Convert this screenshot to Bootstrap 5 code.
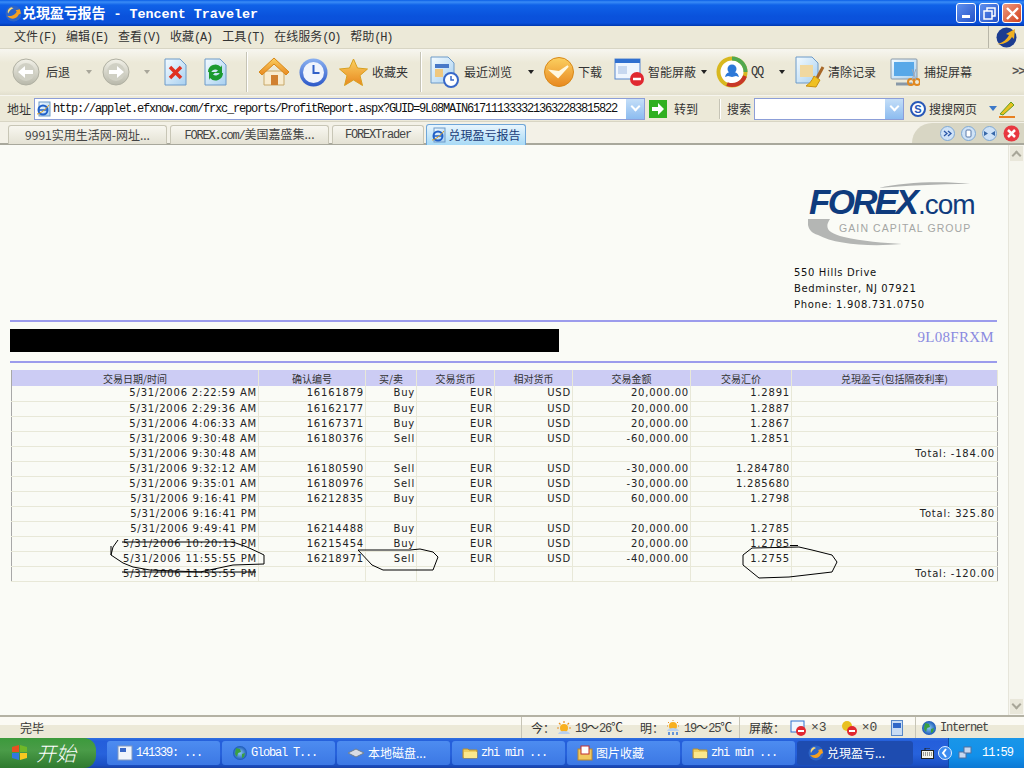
<!DOCTYPE html>
<html lang="zh-CN">
<head>
<meta charset="UTF-8" />
<meta name="viewport" content="width=device-width, initial-scale=1.0" />
<title>兑現盈亏报告 - Tencent Traveler</title>
<link href="https://cdn.jsdelivr.net/npm/bootstrap@5.3.0/dist/css/bootstrap.min.css" rel="stylesheet" />
<style>
  html, body { height: 768px; overflow: hidden; }
  body { background: #ece9d8; color: #333; font: 12px/1 "Noto Sans CJK SC", "Liberation Sans", sans-serif; }
  svg { display: block; flex: none; }
  .lat { font-family: "Liberation Mono", monospace; letter-spacing: -1.2px; }
  .app-win { width: 1024px; height: 768px; }

  .title-bar { height: 26px; padding-left: 5px; color: #fff; font-weight: 700; font-size: 14px;
    background: linear-gradient(#0a5ee6, #3a8cf6 2px, #0f62e8 5px, #0a52dc 16px, #0a50da 23px, #0038b0); }
  .title-txt { letter-spacing: -.1px; }
  .title-txt .lat { font-size: 13.4px; letter-spacing: 0; margin-left: 8px; }
  .win-btns { gap: 3px; margin-right: 2px; }
  .win-btn { width: 20px; height: 20px; border: 1px solid #fff; border-radius: 3px; background: linear-gradient(135deg, #5f90ee, #2452c8); }
  .win-btn.close-x { background: linear-gradient(135deg, #ee9a80, #d2401c); }

  .menu-bar { height: 23px; padding-left: 14px; gap: 10px; border-bottom: 1px solid #d8d5c4; background: #ece9d8; color: #333; }
  .menu-logo { width: 36px; height: 100%; border-left: 1px solid #b8b6a8; }

  .tool-bar { height: 47px; display: grid; align-items: center; padding-left: 12px; font-size: 12px; border-bottom: 1px solid #f6f5ee;
    grid-template-columns: 34px 40px 16px 42px 20px 40px 42px 12px 41px 40px 33px 48px 10px 34px 64px 16px 34px 36px 34px 53px 15px 35px 28px 16px 33px 62px 34px 88px 12px;
    background: linear-gradient(#f7f6f0, #ece9d8 30%, #ece9d8 90%, #e2dfce); }
  .tool-sep { width: 2px; height: 40px; background: #c6c4b6; border-right: 1px solid #fff; }
  .caret-dn { width: 0; height: 0; border: 3px solid transparent; border-top: 4px solid #222; border-bottom: 0; }
  .caret-dn.is-off { border-top-color: #a8a69a; }
  .caret-blue { border-top-color: #3c78c8; border-width: 4px; border-top-width: 5px; border-bottom: 0; }
  .tool-more { font-size: 12px; color: #555; font-weight: 700; letter-spacing: -1px; }

  .addr-bar { height: 26px; padding-left: 7px; display: grid; align-items: center; background: #ece9d8; border-bottom: 1px solid #d8d5c4; color: #333;
    grid-template-columns: 27px 615px 70px 35px 156px 19px 60px 9px 20px; }
  .addr-box { height: 22px; width: 611px; background: #fff; border: 1px solid #8c9ed8; padding-left: 1px; gap: 1px; overflow: hidden; color: #111; }
  .addr-url { font-size: 12px; white-space: nowrap; width: 571px; overflow: hidden; }
  .combo-arrow { width: 18px; height: 20px; flex: none; margin-left: auto; background: linear-gradient(#c4def8, #8cbcf0); display: flex; align-items: center; justify-content: center; }
  .combo-arrow::after { content: ""; width: 7px; height: 7px; border-right: 2px solid #fff; border-bottom: 2px solid #fff; transform: translateY(-2px) rotate(45deg); }
  .go-cell { gap: 7px; }
  .srch-cell { gap: 6px; }
  .srch-box { height: 22px; width: 150px; background: #fff; border: 1px solid #8c9ed8; }
  .srch-sep { width: 2px; height: 20px; background: #c6c4b6; border-right: 1px solid #fff; }

  .tab-bar { height: 23px; padding: 3px 0 0 8px; gap: 3px; background: #f3f1e7; border-bottom: 2px solid #a8a89c; color: #444; position: relative; }
  .tab-item { height: 19px; width: 159px; background: linear-gradient(#f8f7f0, #e4e2d4); border: 1px solid #c8c6b6; border-bottom: 0; border-radius: 3px 3px 0 0; justify-content: center; white-space: nowrap; }
  .tab-sm { width: 92px; }
  .tab-on { width: 100px; height: 21px; margin-top: -1px; background: linear-gradient(#e8f5fd, #a8daf6); border-color: #6fa6d8; color: #1a3c78; font-size: 12px; gap: 1px; margin-left: -1px; }
  .tab-tools { margin-left: auto; width: 112px; height: 20px; margin-top: -2px; padding: 0 4px 0 24px; gap: 6px; background: #d8d6c4; border-radius: 32px 0 0 0; justify-content: flex-end; }

  .page-area { height: 570px; background: #fafbf6; position: relative; overflow: hidden; }
  .page-main { width: 1008px; padding: 0 11px 0 10px; height: 570px; }
  .scroll-bar { width: 16px; background: #f6f6ee; border-left: 1px solid #e6e5da; }
  .scroll-btn { width: 15px; height: 17px; background: #e9e7da; border: 1px solid #f6f5ee; display: flex; align-items: center; justify-content: center; }
  .scroll-btn::after { content: ""; width: 7px; height: 7px; border-left: 2px solid #a8a698; border-top: 2px solid #a8a698; transform: translateY(2px) rotate(45deg); }
  .scroll-dn::after { transform: translateY(-2px) rotate(225deg); }
  .logo-wrap { padding-top: 36px; padding-right: 22px; height: 120px; }
  .logo-box { width: 167px; height: 66px; position: relative; color: #0f3b7d; }
  .logo-box svg { position: absolute; inset: 0; }
  .logo-word { position: absolute; left: 1px; top: 7px; font: italic 700 35px/28px "Liberation Sans", sans-serif; letter-spacing: -2.7px; white-space: nowrap; }
  .logo-word b { font-weight: 400; font-style: normal; font-size: 28px; letter-spacing: -1.1px; margin-left: 2px; }
  .logo-sub { position: absolute; left: 31px; top: 42px; font: 400 10.5px/1 "Liberation Sans", sans-serif; color: #a4a6a4; white-space: nowrap; letter-spacing: 1.1px; }
  .addr-lines { padding-left: 784px; font: 10px/16px "DejaVu Sans", sans-serif; letter-spacing: .65px; color: #111; height: 55px; }
  .rule-box { height: 43px; border-top: 2px solid #9c9cec; border-bottom: 2px solid #9c9cec; padding: 7px 3px 0 0; }
  .black-bar { width: 549px; height: 23px; background: #000; }
  .acct-code { font: 15px "Liberation Serif", serif; color: #8a8ae0; letter-spacing: .3px; }

  .rpt { width: 986px; margin: 7px 0 0 1px; table-layout: fixed; border-collapse: collapse; border: 1px solid #a8a8a8; border-top: 0; font: 10px/14px "DejaVu Sans", sans-serif; letter-spacing: .8px; color: #222; --bs-table-bg: transparent; }
  .rpt > thead > tr > th { background: #ccccf4; height: 16px; padding: 0; text-align: center; font: 400 10px/14px "Noto Sans CJK SC", sans-serif; letter-spacing: 0; color: #333; border: 0; border-right: 1px solid #e8e8d8; }
  .rpt > tbody > tr > td { height: 15px; padding: 0 1px 0 0; text-align: right; border: 0; border-bottom: 1px solid #e8e8d8; border-right: 1px solid #e8e8d8; white-space: nowrap; overflow: hidden; color: #222; background: transparent; box-shadow: none; }
  .rpt > tbody > tr > td:last-child { border-right: 0; padding-right: 2px; }
  .c-date { width: 247px; } .c-num { width: 107px; } .c-side { width: 51px; } .c-cur { width: 78px; }
  .c-amt { width: 118px; } .c-rate { width: 101px; } .c-pl { width: 206px; }
  .ink-layer { position: absolute; left: 0; top: 0; pointer-events: none; }

  .status-bar { height: 23px; padding-left: 20px; color: #333; border-top: 2px solid #b4b2a4; background: linear-gradient(#fbfaf4 40%, #ece9d8 40%); }
  .stat-cell { height: 100%; border-left: 1px solid #c6c4b6; white-space: nowrap; }
  .stat-done { width: 501px; padding-top: 1px; }
  .stat-wea { width: 218px; padding-left: 9px; }
  .stat-blk { width: 176px; padding-left: 9px; }
  .stat-net { width: 108px; padding-left: 5px; gap: 3px; }
  .stat-cell .lat { color: #444; }
  .stat-cell .blk-num { font-size: 13px; letter-spacing: 0; }
  .wea-t1 { margin: 0 3px 0 1px; }
  .wea-lbl { margin-left: 17px; }
  .blk-ico { margin: 0 5px 0 14px; }
  .blk-first { margin-left: 5px; }

  .task-bar { height: 30px; color: #fff; background: linear-gradient(#2f70e0, #245edb 3px, #2762dc 16px, #1a4fc4 27px, #1941a5); }
  .start-btn { width: 96px; height: 30px; padding-left: 11px; gap: 7px; border-radius: 0 12px 12px 0; background: linear-gradient(#3c9a3c, #4a9c48 40%, #2f7a2f); font: italic 300 20px/1 "Noto Sans CJK SC", sans-serif; color: #fff; }
  .task-list { padding-left: 11px; gap: 2px; }
  .task-item { width: 113px; height: 24px; padding-left: 10px; gap: 3px; background: linear-gradient(#4d8cf0, #3c78e4); border-radius: 3px; white-space: nowrap; overflow: hidden; }
  .task-on { width: 116px; background: #1e4cb0; padding-left: 11px; }
  .tray-out { margin-left: auto; gap: 4px; margin-right: -4px; z-index: 1; position: relative; }
  .tray-box { width: 76px; height: 30px; padding-left: 9px; background: linear-gradient(#1a96e8, #1290ea 60%, #0c78d4); border-left: 1px solid #0c4ca8; }
  .tray-time { margin-left: 10px; font-size: 12px; letter-spacing: -1px; }
</style>
</head>
<body>
<svg width="0" height="0" class="position-absolute">
  <defs>
    <linearGradient id="gGray" x1="0" y1="0" x2="0" y2="1"><stop offset="0" stop-color="#f2f1e8"/><stop offset="1" stop-color="#b8b8aa"/></linearGradient>
    <linearGradient id="gPage" x1="0" y1="0" x2="1" y2="1"><stop offset="0" stop-color="#f4fbff"/><stop offset="1" stop-color="#a8d0f0"/></linearGradient>
    <linearGradient id="gOrange" x1="0" y1="0" x2="0" y2="1"><stop offset="0" stop-color="#fbd060"/><stop offset="1" stop-color="#e88820"/></linearGradient>
    <linearGradient id="gBlue" x1="0" y1="0" x2="0" y2="1"><stop offset="0" stop-color="#8ab0f0"/><stop offset="1" stop-color="#2c58c8"/></linearGradient>
    <radialGradient id="gGlobe"><stop offset="0" stop-color="#8ccaf0"/><stop offset="1" stop-color="#1a58b8"/></radialGradient>
    <symbol id="i-app" viewBox="0 0 16 16"><circle cx="8" cy="8" r="7.5" fill="#2c64c8"/><path d="M2 10c3 4 9 4 11-1l2-1-1-4-4 1 1 1c-1 3-5 5-9 4z" fill="#f6a020"/><path d="M6 2c-3 1-4 4-3 6 1-2 2-4 5-5z" fill="#f8d878"/></symbol>
    <symbol id="i-ie" viewBox="0 0 16 16"><rect x="3" y="1" width="11" height="14" fill="url(#gPage)" stroke="#6d9ac8"/><circle cx="7" cy="9" r="4.5" fill="none" stroke="#2060c8" stroke-width="2"/><path d="M3 9h8" stroke="#2060c8" stroke-width="1.5"/><path d="M1 13c3 0 9-5 12-9" fill="none" stroke="#e0a020"/></symbol>
    <symbol id="i-globe" viewBox="0 0 16 16"><circle cx="8" cy="8" r="7" fill="url(#gGlobe)"/><path d="M4 3l4 1 1 3-3 1-1 4-2-3zM10 9l3-1-1 4-2 1z" fill="#3aa040"/></symbol>
    <symbol id="i-folder" viewBox="0 0 16 16"><path d="M1 4h5l1 1h8v8H1z" fill="#f0d060" stroke="#b89030"/><path d="M2 7h13v6H2z" fill="#fbe88c"/></symbol>
    <symbol id="i-sun" viewBox="0 0 16 16"><circle cx="8" cy="8" r="4" fill="#f8b020"/><path d="M8 1v2M1 8h2M13 8h2M3 3l1.500 1.500M13 3l-1.500 1.500" stroke="#e89020" stroke-width="1.200"/><path d="M2 14c1-4 11-4 12 0z" fill="#b8d0f0"/></symbol>
    <symbol id="i-rain" viewBox="0 0 16 16"><circle cx="8" cy="6" r="4" fill="#f8b020"/><path d="M8 0v1M2 6h1M13 6h1M3 2l1 1M13 2l-1 1" stroke="#e89020"/><path d="M2 11c1-4 11-4 12 0z" fill="#b8d0f0"/><path d="M4 12v3M8 12v3M12 12v3" stroke="#3878d8" stroke-width="1.500"/></symbol>
  </defs>
</svg>

<div class="app-win d-flex flex-column">
  <!-- title bar -->
  <div class="title-bar d-flex align-items-center">
    <svg width="17" height="17"><use href="#i-app"/></svg>
    <span class="title-txt">兑現盈亏报告<span class="lat">- Tencent Traveler</span></span>
    <div class="win-btns ms-auto d-flex">
      <div class="win-btn d-flex align-items-end justify-content-center pb-1"><svg width="9" height="3"><rect width="8" height="3" fill="#fff"/></svg></div>
      <div class="win-btn d-flex align-items-center justify-content-center"><svg width="13" height="13" fill="none" stroke="#fff" stroke-width="1.500"><rect x="1" y="4" width="8" height="8"/><path d="M4 4V1h8v8H9"/></svg></div>
      <div class="win-btn close-x d-flex align-items-center justify-content-center"><svg width="13" height="13" stroke="#fff" stroke-width="2.400"><path d="M1 1l11 11M12 1L1 12"/></svg></div>
    </div>
  </div>

  <!-- menu bar -->
  <div class="menu-bar d-flex align-items-center">
    <span>文件<span class="lat">(F)</span></span>
    <span>编辑<span class="lat">(E)</span></span>
    <span>查看<span class="lat">(V)</span></span>
    <span>收藏<span class="lat">(A)</span></span>
    <span>工具<span class="lat">(T)</span></span>
    <span>在线服务<span class="lat">(O)</span></span>
    <span>帮助<span class="lat">(H)</span></span>
    <div class="menu-logo ms-auto d-flex align-items-center justify-content-center">
      <svg width="21" height="21" viewBox="0 0 21 21"><circle cx="10.500" cy="10.500" r="10" fill="#1c3c90"/><path d="M1 17c6-1 10-5 12-9l-3-1 9-5-1 10-2-2c-3 5-9 8-15 7z" fill="#f0b020"/></svg>
    </div>
  </div>

  <!-- tool bar -->
  <div class="tool-bar">
    <svg width="28" height="28" viewBox="0 0 28 28"><circle cx="14" cy="14" r="13" fill="url(#gGray)" stroke="#b0b0a2"/><circle cx="14" cy="14" r="9" fill="#d0d0c4"/><path d="M6 14l7-6v4h8v4h-8v4z" fill="#fff"/></svg>
    <span>后退</span>
    <span class="caret-dn is-off"></span>
    <svg width="28" height="28" viewBox="0 0 28 28"><circle cx="14" cy="14" r="13" fill="url(#gGray)" stroke="#b0b0a2"/><circle cx="14" cy="14" r="9" fill="#d0d0c4"/><path d="M22 14l-7-6v4H7v4h8v4z" fill="#fff"/></svg>
    <span class="caret-dn is-off"></span>
    <svg width="23" height="28" viewBox="0 0 23 28"><path d="M1 1h15l6 6v20H1z" fill="url(#gPage)" stroke="#6d9ac8"/><path d="M6 9l11 11M17 9L6 20" stroke="#e03020" stroke-width="3.500"/></svg>
    <svg width="23" height="28" viewBox="0 0 23 28"><path d="M1 1h15l6 6v20H1z" fill="url(#gPage)" stroke="#6d9ac8"/><path d="M4 14a7.500 7.500 0 0 1 13-5l1-2v8h-7l3-2.500a4.500 4.500 0 0 0-7 2zM19 15a7.500 7.500 0 0 1-13 5l-1 2v-8h7l-3 2.500a4.500 4.500 0 0 0 7-2z" fill="#1c9a30"/></svg>
    <span class="tool-sep"></span>
    <svg width="32" height="30" viewBox="0 0 32 30"><path d="M6 14v14h20V14z" fill="#f8ecd0" stroke="#c8a868"/><path d="M1 15L16 1l15 14-3 3L16 7 4 18z" fill="url(#gOrange)" stroke="#d88818"/><rect x="13" y="18" width="7" height="10" fill="#d08030"/></svg>
    <svg width="29" height="29" viewBox="0 0 29 29"><circle cx="14.500" cy="14.500" r="14" fill="url(#gBlue)"/><circle cx="14.500" cy="14.500" r="10.500" fill="#f0f4fc"/><path d="M14.500 7v8h6" fill="none" stroke="#3060c8" stroke-width="2"/></svg>
    <svg width="29" height="28" viewBox="0 0 29 28"><path d="M14.500 1l4 9 10 1-7.500 6.500 2.500 10-9-5.500-9 5.500 2.500-10L.5 11l10-1z" fill="url(#gOrange)" stroke="#d8a020"/></svg>
    <span>收藏夹</span>
    <span class="tool-sep"></span>
    <svg width="29" height="32" viewBox="0 0 29 32"><path d="M1 1h17l6 6v20H1z" fill="url(#gPage)" stroke="#6d9ac8"/><rect x="5" y="8" width="14" height="4" fill="#4878c8"/><rect x="5" y="13" width="8" height="8" fill="#f0c880"/><circle cx="21" cy="24" r="7" fill="#fff" stroke="#3868c8" stroke-width="2"/><path d="M21 20v4h3" fill="none" stroke="#3868c8" stroke-width="1.500"/></svg>
    <span>最近浏览</span>
    <span class="caret-dn"></span>
    <svg width="30" height="30" viewBox="0 0 30 30"><circle cx="15" cy="15" r="14.500" fill="url(#gOrange)" stroke="#d88818"/><path d="M7 14l7 6 10-11-9 6z" fill="#fff8e0" stroke="#fff8e0" stroke-width="2"/></svg>
    <span>下载</span>
    <svg width="30" height="28" viewBox="0 0 30 28"><rect x="1" y="1" width="25" height="20" fill="#f0f6fe" stroke="#5888d0"/><rect x="1" y="1" width="25" height="4" fill="#3070d0"/><rect x="4" y="8" width="9" height="8" fill="#c8d8f0"/><circle cx="23" cy="21" r="7" fill="#e02830"/><path d="M19 21h8" stroke="#fff" stroke-width="2.500"/></svg>
    <span>智能屏蔽</span>
    <span class="caret-dn"></span>
    <svg width="32" height="32" viewBox="0 0 32 32"><circle cx="16" cy="16" r="13.500" fill="#fff" stroke="#d8b820" stroke-width="4"/><path d="M16 2.500a13.500 13.500 0 0 1 13.500 13.500" fill="none" stroke="#50a850" stroke-width="4"/><path d="M29 20a13.500 13.500 0 0 1-18 8" fill="none" stroke="#c83828" stroke-width="4"/><circle cx="16" cy="13" r="4.500" fill="#2c78d8"/><path d="M9 21c1-4 3-5 7-5s6 1 7 5l-3-1-4 1-4-1z" fill="#2c78d8"/></svg>
    <span class="lat">QQ</span>
    <span class="caret-dn"></span>
    <svg width="30" height="32" viewBox="0 0 30 32"><path d="M1 1h16l6 6v20H1z" fill="url(#gPage)" stroke="#6d9ac8"/><rect x="5" y="9" width="13" height="12" fill="#f0d8a0"/><path d="M28 11l-6 11" stroke="#a86828" stroke-width="3"/><path d="M19 20l6 4-4 7-10-1c3-2 6-5 8-10z" fill="#f0c020" stroke="#c89010"/></svg>
    <span>清除记录</span>
    <svg width="30" height="28" viewBox="0 0 30 28"><rect x="1" y="1" width="26" height="20" rx="1" fill="url(#gPage)" stroke="#8898a8"/><rect x="4" y="4" width="20" height="14" fill="#58a8e8"/><path d="M6 26h16" stroke="#8898a8" stroke-width="3"/><circle cx="21" cy="24" r="3" fill="none" stroke="#e08820" stroke-width="2"/><circle cx="27" cy="24" r="3" fill="none" stroke="#e08820" stroke-width="2"/><path d="M22 22l4-11M26 22l-4-11" stroke="#a0a8b8"/></svg>
    <span>捕捉屏幕</span>
    <span class="tool-more lat">&gt;&gt;</span>
  </div>

  <!-- address bar -->
  <div class="addr-bar">
    <span>地址</span>
    <div class="addr-box d-flex align-items-center">
      <svg width="16" height="16"><use href="#i-ie"/></svg>
      <span class="addr-url lat">http://applet.efxnow.com/frxc_reports/ProfitReport.aspx?GUID=9L08MAIN6171113333213632283815822</span>
      <span class="combo-arrow"></span>
    </div>
    <div class="go-cell d-flex align-items-center">
      <svg width="18" height="18" viewBox="0 0 18 18"><rect width="18" height="18" fill="#30b020"/><path d="M3 7h6V3l6 6-6 6v-4H3z" fill="#fff"/></svg>
      <span>转到</span>
    </div>
    <span class="srch-cell d-flex align-items-center"><span class="srch-sep"></span><span>搜索</span></span>
    <div class="srch-box d-flex"><span class="combo-arrow"></span></div>
    <svg width="16" height="16" viewBox="0 0 16 16"><circle cx="8" cy="8" r="7" fill="#fff" stroke="#2858b8" stroke-width="2"/><text x="8" y="12" text-anchor="middle" font-family="Liberation Sans" font-weight="700" font-size="11" fill="#2858b8">S</text></svg>
    <span>搜搜网页</span>
    <span class="caret-dn caret-blue"></span>
    <svg width="18" height="18" viewBox="0 0 18 18"><path d="M2 14L13 2l3 3L5 15z" fill="#e8c020" stroke="#60a020"/><path d="M1 17h16" stroke="#e88020" stroke-width="2"/></svg>
  </div>

  <!-- tab bar -->
  <div class="tab-bar d-flex">
    <div class="tab-item d-flex align-items-center">9991实用生活网-网址...</div>
    <div class="tab-item d-flex align-items-center"><span><span class="lat">FOREX.com/</span>美国嘉盛集...</span></div>
    <div class="tab-item tab-sm d-flex align-items-center lat">FOREXTrader</div>
    <div class="tab-item tab-on d-flex align-items-center"><svg width="16" height="16"><use href="#i-ie"/></svg>兑現盈亏报告</div>
    <div class="tab-tools d-flex align-items-center">
      <svg width="15" height="15" viewBox="0 0 15 15"><circle cx="7.500" cy="7.500" r="7" fill="#cfe2f6" stroke="#7ea8d4"/><path d="M4 5l3 2.500L4 10M8 5l3 2.500L8 10" fill="none" stroke="#2c58a8" stroke-width="1.300"/></svg>
      <svg width="15" height="15" viewBox="0 0 15 15"><circle cx="7.500" cy="7.500" r="7" fill="#cfe2f6" stroke="#7ea8d4"/><rect x="5" y="4" width="5" height="7" rx="1" fill="#fff" stroke="#5878a8"/></svg>
      <svg width="15" height="15" viewBox="0 0 15 15"><circle cx="7.500" cy="7.500" r="7" fill="#cfe2f6" stroke="#7ea8d4"/><path d="M2 5l4 2.500L2 10zM13 5L9 7.500l4 2.500z" fill="#3868a8"/></svg>
      <svg width="17" height="17" viewBox="0 0 17 17"><circle cx="8.500" cy="8.500" r="8" fill="#e83840"/><path d="M5 5l7 7M12 5l-7 7" stroke="#fff" stroke-width="2.500"/></svg>
    </div>
  </div>

  <!-- page -->
  <div class="page-area d-flex">
    <div class="page-main">
      <div class="logo-wrap d-flex justify-content-end">
        <div class="logo-box">
          <svg width="167" height="66" viewBox="0 0 167 66"><path d="M71 7C95 1 135 0 162 3 130 3 95 5 71 7z" fill="#b0b2b0"/><path d="M0 38h22c-6 9-2 14 14 18 18 4 40 6 58 7-34 3-68 0-84-9C1 51-1 45 0 38z" fill="#b4b6b4"/></svg>
          <span class="logo-word">FOREX<b>.com</b></span>
          <span class="logo-sub">GAIN CAPITAL GROUP</span>
        </div>
      </div>
      <div class="addr-lines">550 Hills Drive<br>Bedminster, NJ 07921<br>Phone: 1.908.731.0750</div>
      <div class="rule-box d-flex justify-content-between">
        <div class="black-bar"></div>
        <div class="acct-code">9L08FRXM</div>
      </div>
      <table class="table rpt">
        <thead>
          <tr>
            <th class="c-date">交易日期/时间</th><th class="c-num">确认编号</th><th class="c-side">买/卖</th><th class="c-cur">交易货币</th><th class="c-cur">相对货币</th><th class="c-amt">交易金额</th><th class="c-rate">交易汇价</th><th class="c-pl">兑現盈亏(包括隔夜利率)</th>
          </tr>
        </thead>
        <tbody id="rptRows"></tbody>
      </table>
    </div>
    <div class="scroll-bar ms-auto d-flex flex-column justify-content-between">
      <div class="scroll-btn"></div>
      <div class="scroll-btn scroll-dn"></div>
    </div>
    <svg class="ink-layer" width="1008" height="570" viewBox="0 145 1008 570" fill="none" stroke="#000" stroke-width="1">
      <path d="M118 540l-5 7-2 8 12 8 10 4 17 3 50 2 33-7 31-1v-9l-4-2-13-6-14-5H122"/>
      <path d="M111 546v9"/>
      <path d="M122 572h134"/>
      <path d="M358 550h52l10-1 13 3 5 5-5 13h-50l-11-5z"/>
      <path d="M799 547l-47 1-9 7v10l16 13 30-1 43-5 5-10-5-7-20-5z"/>
      <path d="M790 545.500h8"/>
    </svg>
  </div>

  <!-- status bar -->
  <div class="status-bar d-flex align-items-center">
    <div class="stat-done">完毕</div>
    <div class="stat-cell stat-wea d-flex align-items-center">
      <span>今：</span><svg class="wea-t1" width="16" height="16"><use href="#i-sun"/></svg><span><span class="lat">19</span>～<span class="lat">26</span>℃</span>
      <span class="wea-lbl">明：</span><svg class="wea-t1" width="16" height="16"><use href="#i-rain"/></svg><span><span class="lat">19</span>～<span class="lat">25</span>℃</span>
    </div>
    <div class="stat-cell stat-blk d-flex align-items-center"><span>屏蔽：</span><svg class="blk-ico blk-first" width="16" height="16" viewBox="0 0 16 16"><rect x="1" y="1" width="13" height="11" fill="#f0f6fe" stroke="#3070d0"/><circle cx="11" cy="11" r="5" fill="#e02830"/><path d="M8 11h6" stroke="#fff" stroke-width="2"/></svg><span class="lat blk-num">×3</span><svg class="blk-ico" width="16" height="16" viewBox="0 0 16 16"><circle cx="6" cy="6" r="5" fill="#e8c020"/><circle cx="11" cy="11" r="5" fill="#e02830"/><path d="M8 11h6" stroke="#fff" stroke-width="2"/></svg><span class="lat blk-num">×0</span><svg class="blk-ico" width="12" height="16" viewBox="0 0 12 16"><rect x=".5" y=".5" width="11" height="15" fill="#c8dcf4" stroke="#5888c8"/><rect x="2" y="3" width="8" height="5" fill="#3068c8"/></svg></div>
    <div class="stat-cell stat-net d-flex align-items-center"><svg width="16" height="16"><use href="#i-globe"/></svg><span class="lat">Internet</span></div>
  </div>

  <!-- task bar -->
  <div class="task-bar d-flex align-items-center">
    <div class="start-btn d-flex align-items-center">
      <svg width="18" height="18" viewBox="0 0 18 18"><path d="M1 3l7-2v7H1z" fill="#e85020"/><path d="M9 1l7 2v5H9z" fill="#70b828"/><path d="M1 9h7v7l-7-2z" fill="#3078e0"/><path d="M9 9h7v5l-7 2z" fill="#f8c820"/></svg>
      <span>开始</span>
    </div>
    <div class="task-list d-flex align-items-center">
      <div class="task-item d-flex align-items-center"><svg width="16" height="16" viewBox="0 0 16 16"><rect x="1" y="1" width="14" height="14" fill="#eef4fc" stroke="#8098c0"/><rect x="3" y="3" width="6" height="4" fill="#3868c8"/></svg><span class="lat">141339: ...</span></div>
      <div class="task-item d-flex align-items-center"><svg width="16" height="16"><use href="#i-globe"/></svg><span class="lat">Global T...</span></div>
      <div class="task-item d-flex align-items-center"><svg width="18" height="14" viewBox="0 0 18 14"><path d="M1 7l8-4 8 4-8 4z" fill="#d8dce4" stroke="#708090"/></svg><span>本地磁盘...</span></div>
      <div class="task-item d-flex align-items-center"><svg width="16" height="16"><use href="#i-folder"/></svg><span class="lat">zhi min ...</span></div>
      <div class="task-item d-flex align-items-center"><svg width="16" height="16" viewBox="0 0 16 16"><rect x="1" y="4" width="14" height="11" fill="#f0c860" stroke="#b88830"/><rect x="4" y="1" width="8" height="8" fill="#fff" stroke="#c03030"/></svg><span>图片收藏</span></div>
      <div class="task-item d-flex align-items-center"><svg width="16" height="16"><use href="#i-folder"/></svg><span class="lat">zhi min ...</span></div>
      <div class="task-item task-on d-flex align-items-center"><svg width="16" height="16"><use href="#i-app"/></svg><span>兑現盈亏...</span></div>
    </div>
    <div class="tray-out d-flex align-items-center">
      <svg width="13" height="11" viewBox="0 0 13 11"><rect x=".5" y="2.500" width="12" height="8" fill="#f4f4ec" stroke="#222"/><path d="M2 5h9M2 7h9" stroke="#444" stroke-dasharray="1 1"/><path d="M4 2.500V0h5" fill="none" stroke="#222"/></svg>
      <svg width="14" height="14" viewBox="0 0 14 14"><circle cx="7" cy="7" r="6.500" fill="#3c8cf0" stroke="#e0f0ff"/><path d="M8 3L5 7l3 4" fill="none" stroke="#fff" stroke-width="2"/></svg>
    </div>
    <div class="tray-box d-flex align-items-center">
      <svg width="14" height="14" viewBox="0 0 14 14"><rect x="1" y="6" width="7" height="6" fill="#c8d8f0" stroke="#5070a0"/><rect x="6" y="1" width="7" height="6" fill="#c8d8f0" stroke="#5070a0"/></svg>
      <span class="tray-time lat">11:59</span>
    </div>
  </div>
</div>

<script>
  // report rows: date, ticket, side, currency, counter, amount, rate, total
  const rows = [
    ["5/31/2006 2:22:59 AM","16161879","Buy","EUR","USD","20,000.00","1.2891",""],
    ["5/31/2006 2:29:36 AM","16162177","Buy","EUR","USD","20,000.00","1.2887",""],
    ["5/31/2006 4:06:33 AM","16167371","Buy","EUR","USD","20,000.00","1.2867",""],
    ["5/31/2006 9:30:48 AM","16180376","Sell","EUR","USD","-60,000.00","1.2851",""],
    ["5/31/2006 9:30:48 AM","","","","","","","Total: -184.00"],
    ["5/31/2006 9:32:12 AM","16180590","Sell","EUR","USD","-30,000.00","1.284780",""],
    ["5/31/2006 9:35:01 AM","16180976","Sell","EUR","USD","-30,000.00","1.285680",""],
    ["5/31/2006 9:16:41 PM","16212835","Buy","EUR","USD","60,000.00","1.2798",""],
    ["5/31/2006 9:16:41 PM","","","","","","","Total: 325.80"],
    ["5/31/2006 9:49:41 PM","16214488","Buy","EUR","USD","20,000.00","1.2785",""],
    ["5/31/2006 10:20:13 PM","16215454","Buy","EUR","USD","20,000.00","1.2785",""],
    ["5/31/2006 11:55:55 PM","16218971","Sell","EUR","USD","-40,000.00","1.2755",""],
    ["5/31/2006 11:55:55 PM","","","","","","","Total: -120.00"]
  ];
  document.getElementById("rptRows").innerHTML = rows
    .map(r => "<tr>" + r.map(c => `<td>${c}</td>`).join("") + "</tr>")
    .join("");
</script>
<script src="https://cdn.jsdelivr.net/npm/bootstrap@5.3.0/dist/js/bootstrap.bundle.min.js"></script>
</body>
</html>
